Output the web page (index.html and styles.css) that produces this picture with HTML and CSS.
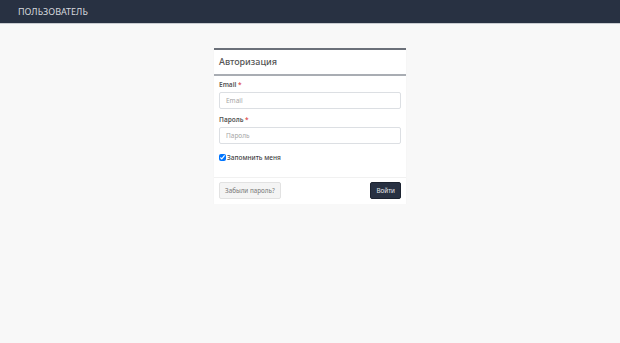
FILE: index.html
```html
<!DOCTYPE html>
<html lang="ru">
<head>
    <meta charset="UTF-8">
    <title>Авторизация</title>
    <link rel="stylesheet" href="styles.css">
</head>
<body>

<div class="navbar">
    <span class="brand">ПОЛЬЗОВАТЕЛЬ</span>
</div>

<div class="page">
    <form class="box">
        <div class="box-header">
            <h3>Авторизация</h3>
        </div>
        <div class="box-body">
            <div class="field">
                <label>Email <span class="req">*</span></label>
                <input type="text" placeholder="Email">
            </div>
            <div class="field">
                <label>Пароль <span class="req">*</span></label>
                <input type="password" placeholder="Пароль">
            </div>
            <div class="remember">
                <input type="checkbox" checked>
                <span>Запомнить меня</span>
            </div>
        </div>
        <div class="box-footer">
            <button type="button" class="btn-light">Забыли пароль?</button>
            <button type="button" class="btn-dark">Войти</button>
        </div>
    </form>
</div>

</body>
</html>
```

FILE: styles.css
```css
body{
    margin: 0;
    padding: 0;
    background: #f8f8f8;
    font-family: "Noto Sans", "Open Sans", sans-serif;
    color: #333;
}

.navbar{
    height: 23px;
    background: #283142;
    border-bottom: 1px solid #c9ccd1;
    display: flex;
    align-items: center;
    padding-left: 18px;
}

.brand{
    color: #d6d9de;
    font-size: 9px;
    line-height: 10px;
}

.page{
    display: flex;
    justify-content: center;
    padding-top: 24px;
}

.box{
    width: 192px;
    background: #fff;
    border-top: 2px solid #6b7079;
    box-shadow: 0 1px 1px rgba(0, 0, 0, 0.06);
}

.box-header{
    height: 24px;
    border-bottom: 2px solid #a9adb3;
    padding: 0 5px;
    display: flex;
    align-items: center;
}

.box-header h3{
    margin: 0;
    font-size: 9px;
    font-weight: 500;
    color: #555;
    line-height: 12px;
}

.box-body{
    padding: 4px 5px 15px;
}

.field{
    margin-bottom: 6px;
}

.field label{
    display: block;
    font-size: 6.5px;
    line-height: 10px;
    font-weight: 600;
    color: #555;
    margin-bottom: 2px;
}

.req{
    color: #e05555;
}

.field input{
    display: block;
    box-sizing: border-box;
    width: 100%;
    height: 17px;
    border: 1px solid #dcdfe3;
    border-radius: 2px;
    padding: 0 6px;
    font-size: 6.5px;
    font-family: inherit;
}

.field input::placeholder{
    color: #a6a6a6;
}

.remember{
    display: flex;
    align-items: center;
    gap: 1px;
    height: 10px;
    margin-top: 8px;
    font-size: 6.5px;
    font-weight: 500;
    color: #444;
}

.remember input{
    width: 7px;
    height: 7px;
    margin: 0;
}

.box-footer{
    border-top: 1px solid #f1f1f1;
    padding: 4px 5px 5px;
    display: flex;
    justify-content: space-between;
}

.box-footer button{
    height: 17px;
    font-size: 6.3px;
    line-height: 15px;
    font-family: inherit;
    border-radius: 2px;
    padding: 0 5px;
    cursor: pointer;
}

.btn-light{
    background: #f4f4f4;
    border: 1px solid #e2e2e2;
    color: #777;
}

.btn-dark{
    background: #283142;
    border: 1px solid #1c2330;
    color: #e6e8eb;
}
```
